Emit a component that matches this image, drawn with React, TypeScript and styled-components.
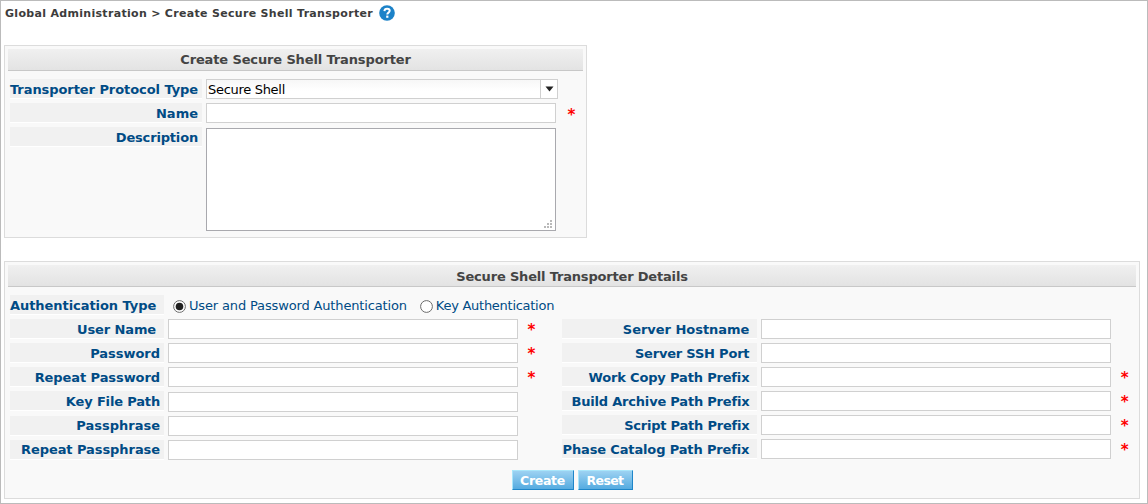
import React from "react";
import styled, { createGlobalStyle } from "styled-components";

const Global = createGlobalStyle`
  * { box-sizing: border-box; }
  body { margin: 0; background: #fff; }
  body, input, textarea, button { font-family: Verdana, "DejaVu Sans", sans-serif; font-size: 13px; }
`;

const Page = styled.main`
  height: 504px;
  border: 1px solid #bbb;
  padding: 0 0 0 3px;
  overflow: hidden;
`;

const Breadcrumb = styled.header`
  display: flex;
  align-items: center;
  gap: 6px;
  height: 24px;
  margin-bottom: 20px;
  padding-left: 1px;
  color: #3c3c3c;
  font-size: 11px;
  font-weight: bold;
  letter-spacing: 0.31px;
  white-space: nowrap;
`;

const HelpIcon = styled.svg`
  display: block;
  width: 16px;
  height: 16px;
`;

const Panel = styled.section<{ $w: number; $h: number }>`
  width: ${(p) => p.$w}px;
  height: ${(p) => p.$h}px;
  padding: 3px 3px 0;
  border: 1px solid #dcdcdc;
  background: #f9f9f9;
  & + & { margin-top: 23px; }
`;

const PanelTitle = styled.h2<{ $spacing: number; $line?: number }>`
  height: 22px;
  margin: 0 0 8px;
  border-bottom: 1px solid #c8c8c8;
  background: linear-gradient(#f0f0f0, #e3e3e3);
  color: #444;
  font-size: 13px;
  font-weight: bold;
  letter-spacing: ${(p) => p.$spacing}px;
  line-height: ${(p) => p.$line ?? 21}px;
  text-align: center;
  white-space: nowrap;
`;

const Columns = styled.div`
  display: flex;
  gap: 25px;
`;

const Column = styled.div`
  padding-left: 2px;
`;

const Row = styled.div<{ $h?: number }>`
  display: flex;
  align-items: flex-start;
  height: ${(p) => p.$h ?? 24}px;
`;

const Label = styled.label<{ $w: number; $pad?: number; $spacing?: number; $drop?: number }>`
  flex: none;
  width: ${(p) => p.$w}px;
  height: 20px;
  margin: ${(p) => p.$drop ?? 0}px 4px 0 0;
  padding-right: ${(p) => p.$pad ?? 4}px;
  border-bottom: 1px solid #fff;
  background: #f1f1f1;
  color: #004b85;
  font-weight: bold;
  letter-spacing: ${(p) => p.$spacing ?? 0}px;
  line-height: ${(p) => 21 - 2 * (p.$drop ?? 0)}px;
  text-align: right;
  white-space: nowrap;
`;

const Field = styled.input<{ $drop?: number }>`
  display: block;
  width: 350px;
  height: 20px;
  margin: ${(p) => p.$drop ?? 0}px 0 0;
  padding: 0 2px;
  border: 1px solid #d0d0d0;
  border-radius: 0;
  background: #fff;
  outline: none;
`;

const Required = styled.span<{ $gap?: number; $line?: number }>`
  margin-left: ${(p) => p.$gap ?? 9.5}px;
  color: #f00;
  font-size: 15px;
  font-weight: bold;
  line-height: ${(p) => p.$line ?? 23}px;
`;

const Select = styled.div`
  display: flex;
  width: 352px;
  height: 20px;
  border: 1px solid #d0d0d0;
  background: linear-gradient(#f7f7f7, #fff 60%);
  color: #000;
  letter-spacing: -0.3px;
  line-height: 19px;
`;

const SelectValue = styled.span`
  flex: 1;
  padding-left: 1px;
`;

const SelectArrow = styled.span`
  display: flex;
  align-items: center;
  justify-content: center;
  width: 17px;
  border-left: 1px solid #d0d0d0;
  background: #fff;
`;

const AreaWrap = styled.div`
  position: relative;
  width: 350px;
  height: 103px;
  margin-top: 1px;
`;

const Area = styled.textarea`
  display: block;
  width: 100%;
  height: 100%;
  border: 1px solid #a9a9ae;
  border-radius: 0;
  resize: none;
  outline: none;
`;

const Grip = styled.svg`
  position: absolute;
  right: 4px;
  bottom: 3px;
`;

const Choice = styled.label<{ $ml: number; $spacing?: number }>`
  display: flex;
  align-items: flex-start;
  gap: 3px;
  margin-left: ${(p) => p.$ml}px;
  color: #004b85;
  letter-spacing: ${(p) => p.$spacing ?? 0}px;
  line-height: 21px;
  white-space: nowrap;
`;

const RadioMark = styled.svg`
  display: block;
  width: 13px;
  height: 13px;
  margin-top: 5px;
`;

const Actions = styled.div`
  display: flex;
  justify-content: center;
  gap: 4px;
  margin-top: 7px;
`;

const Button = styled.button<{ $w: number; $spacing: number }>`
  width: ${(p) => p.$w}px;
  height: 20px;
  padding: 1px 0 0;
  border: 1px solid;
  border-color: #a8e6fb #1f86c9 #1f86c9 #a8e6fb;
  background: linear-gradient(#9dd2f2, #55abe0);
  color: #fff;
  font-size: 12.5px;
  font-weight: bold;
  letter-spacing: ${(p) => p.$spacing}px;
  line-height: 18px;
`;

const Radio = ({ on }: { on?: boolean }) => (
  <RadioMark viewBox="0 0 13 13">
    <circle cx="6.5" cy="6.5" r="5.9" fill="#fff" stroke="#6b6b6b" />
    {on && <circle cx="6.5" cy="6.5" r="3.8" fill="#202020" />}
  </RadioMark>
);

type Item = {
  label: string;
  required?: boolean;
  pad?: number;
  drop?: number;
  labelDrop?: number;
  spacing?: number;
};

const credentials: Item[] = [
  { label: "User Name", required: true, pad: 8, spacing: -0.12 },
  { label: "Password", required: true, spacing: -0.03 },
  { label: "Repeat Password", required: true, spacing: -0.08 },
  { label: "Key File Path", drop: 1, spacing: -0.16 },
  { label: "Passphrase", drop: 1, labelDrop: 1, spacing: 0 },
  { label: "Repeat Passphrase", drop: 1, labelDrop: 1, spacing: -0.07 },
];

const server: Item[] = [
  { label: "Server Hostname", spacing: -0.03 },
  { label: "Server SSH Port", spacing: -0.2 },
  { label: "Work Copy Path Prefix", required: true, spacing: -0.17 },
  { label: "Build Archive Path Prefix", required: true, spacing: -0.2 },
  { label: "Script Path Prefix", required: true, spacing: -0.22 },
  { label: "Phase Catalog Path Prefix", required: true, spacing: -0.14 },
];

const FieldRow = ({ item, w, pad }: { item: Item; w: number; pad?: number }) => (
  <Row>
    <Label $w={w} $pad={item.pad ?? pad} $spacing={item.spacing} $drop={item.labelDrop}>{item.label}</Label>
    <Field aria-label={item.label} $drop={item.drop} />
    {item.required && <Required>*</Required>}
  </Row>
);

export default function App() {
  return (
    <>
      <Global />
      <Page>
        <Breadcrumb>
          <span>Global Administration &gt; Create Secure Shell Transporter</span>
          <HelpIcon viewBox="0 0 16 16">
            <circle cx="8" cy="8" r="7.8" fill="#1c82c8" />
            <path d="M5.4 6.1C5.5 4.5 6.5 3.7 8.1 3.7c1.6 0 2.6.9 2.6 2.1 0 1.8-2.4 1.8-2.4 3.6" fill="none" stroke="#fff" strokeWidth="2" />
            <rect x="7.2" y="10.6" width="2.2" height="2.2" fill="#fff" />
          </HelpIcon>
        </Breadcrumb>

        <Panel $w={583} $h={193}>
          <PanelTitle $spacing={-0.13}>Create Secure Shell Transporter</PanelTitle>
          <Column>
            <Row>
              <Label $w={192} $spacing={-0.07}>Transporter Protocol Type</Label>
              <Select>
                <SelectValue>Secure Shell</SelectValue>
                <SelectArrow>
                  <svg width="9" height="6" viewBox="0 0 9 6"><path d="M0.5 0.5h8L4.5 5.5z" fill="#222" /></svg>
                </SelectArrow>
              </Select>
            </Row>
            <Row>
              <Label $w={192}>Name</Label>
              <Field aria-label="Name" />
              <Required $gap={11.5} $line={25}>*</Required>
            </Row>
            <Row $h={104}>
              <Label $w={192} $spacing={-0.17}>Description</Label>
              <AreaWrap>
                <Area aria-label="Description" />
                <Grip width="8" height="8" viewBox="0 0 8 8" fill="#b9b9b9">
                  <path d="M6 0h2v2H6zM3 3h2v2H3zM6 3h2v2H6zM0 6h2v2H0zM3 6h2v2H3zM6 6h2v2H6z" />
                </Grip>
              </AreaWrap>
            </Row>
          </Column>
        </Panel>

        <Panel $w={1136} $h={238}>
          <PanelTitle $spacing={-0.18} $line={23}>Secure Shell Transporter Details</PanelTitle>
          <Column>
            <Row>
              <Label $w={154} $pad={8} $spacing={-0.06}>Authentication Type</Label>
              <Choice $ml={5} $spacing={-0.15}><Radio on />User and Password Authentication</Choice>
              <Choice $ml={13} $spacing={-0.27}><Radio />Key Authentication</Choice>
            </Row>
          </Column>
          <Columns>
            <Column>
              {credentials.map((f) => <FieldRow key={f.label} item={f} w={154} />)}
            </Column>
            <Column>
              {server.map((f) => <FieldRow key={f.label} item={f} w={195} pad={8} />)}
            </Column>
          </Columns>
          <Actions>
            <Button $w={62} $spacing={-0.3}>Create</Button>
            <Button $w={55} $spacing={-0.6}>Reset</Button>
          </Actions>
        </Panel>
      </Page>
    </>
  );
}
